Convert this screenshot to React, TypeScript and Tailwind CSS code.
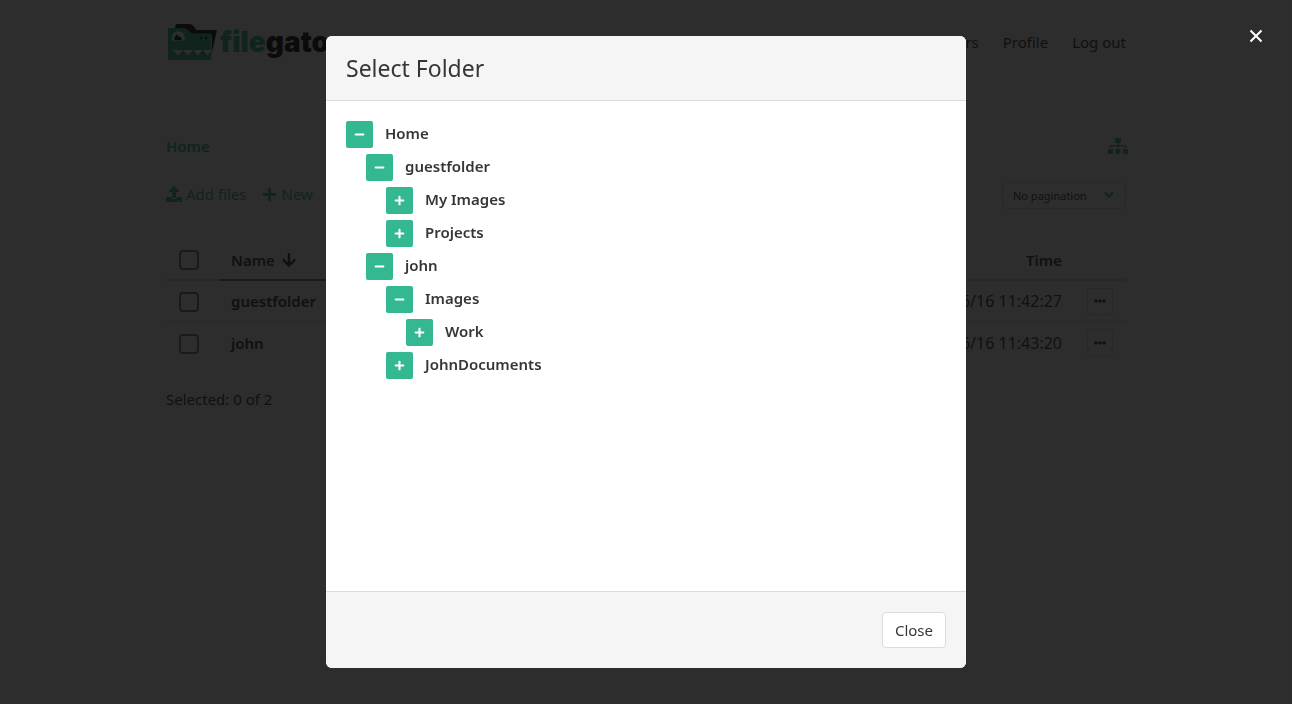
import { useState } from "react";
import {
  FaArrowDown,
  FaChevronDown,
  FaEllipsisH,
  FaMinus,
  FaPlus,
  FaSitemap,
  FaUpload,
} from "react-icons/fa";

type Folder = {
  name: string;
  open?: boolean;
  children?: Folder[];
};

const tree: Folder = {
  name: "Home",
  open: true,
  children: [
    {
      name: "guestfolder",
      open: true,
      children: [{ name: "My Images" }, { name: "Projects" }],
    },
    {
      name: "john",
      open: true,
      children: [
        { name: "Images", open: true, children: [{ name: "Work" }] },
        { name: "JohnDocuments" },
      ],
    },
  ],
};

const files = [
  { name: "guestfolder", size: "Folder", time: "19/06/16 11:42:27" },
  { name: "john", size: "Folder", time: "19/06/16 11:43:20" },
];

const checkboxClass =
  "block h-5 w-5 appearance-none rounded border-2 border-[#7a7a7a] bg-white checked:bg-[#34b891]";

function Logo() {
  return (
    <a href="#" aria-label="filegator" className="flex items-center gap-[2px] pl-[2px]">
      <svg width="50" height="36" viewBox="0 0 50 36">
        <path d="M7 4 8 0h13q3 0 4.500 2l3 4H49l-5 22V12H7Z" fill="#111" />
        <path
          d="M0 5q0-1 1-1h15c4 0 5 5.500 10 5.500h17.500V34q0 2-2 2H2q-2 0-2-2Z"
          fill="#34b891"
        />
        <path d="M4 16.500v-3a6.300 6.300 0 0 1 12.600 0v3Z" fill="#fff" />
        <path d="M6.500 16v-2.500q.5-2 3-3.500l.5 2.500 3 .5.800 3Z" fill="#111" />
        <circle cx="33" cy="14" r="1.200" fill="#111" />
        <circle cx="38" cy="14" r="1.200" fill="#111" />
        <path
          d="M5 26h10l-5 5.500ZM15.500 26h9.500l-5 5.500ZM25.500 26h9l-4.500 5.500ZM35 26h8.500l-4 5.500Z"
          fill="#fff"
        />
      </svg>
      <span className="font-['Inter',sans-serif] text-[28px] leading-9 font-black text-[#111]">
        <span className="text-[#34b891]">file</span>gator
      </span>
    </a>
  );
}

function TreeNode({ folder }: { folder: Folder }) {
  const [open, setOpen] = useState(Boolean(folder.open));

  return (
    <li>
      <div className="mb-[6px] flex items-start gap-3">
        <button
          type="button"
          aria-label={`${open ? "Collapse" : "Expand"} ${folder.name}`}
          onClick={() => setOpen(!open)}
          className="flex h-[27px] w-[27px] items-center justify-center rounded-xs bg-[#34b891] text-white"
        >
          {open ? <FaMinus size={11} /> : <FaPlus size={11} />}
        </button>
        <a href="#" className="font-semibold">
          {folder.name}
        </a>
      </div>
      {open && folder.children && (
        <ul className="pl-5">
          {folder.children.map((child) => (
            <TreeNode key={child.name} folder={child} />
          ))}
        </ul>
      )}
    </li>
  );
}

function Browser() {
  return (
    <div className="mx-auto max-w-[960px]">
      <nav className="flex items-center justify-between pt-6">
        <Logo />
        <div className="flex gap-6">
          <a href="#">Files</a>
          <a href="#">Users</a>
          <a href="#">Profile</a>
          <a href="#">Log out</a>
        </div>
      </nav>

      <div className="mt-[74px] flex h-6 items-center justify-between text-[#34b891]">
        <a href="#" className="font-semibold">
          Home
        </a>
        <button
          type="button"
          aria-label="Select folder"
          className="flex w-4 justify-center"
        >
          <FaSitemap className="h-4 w-5 shrink-0" />
        </button>
      </div>

      <div className="mt-6 flex items-start justify-between">
        <div className="flex gap-4 text-[#34b891]">
          <button type="button" className="flex items-center gap-1">
            <FaUpload size={16} /> Add files
          </button>
          <button type="button" className="flex items-center gap-1">
            <FaPlus size={15} /> New
          </button>
        </div>
        <div className="relative">
          <select
            aria-label="Items per page"
            className="block h-[27px] w-[124px] appearance-none rounded-sm border border-[#dbdbdb] bg-white px-[10px] text-[11px]"
          >
            <option>No pagination</option>
            <option>5 per page</option>
            <option>10 per page</option>
          </select>
          <FaChevronDown
            size={10}
            stroke="currentColor"
            strokeWidth={50}
            className="pointer-events-none absolute top-2 right-3 text-[#34b891]"
          />
        </div>
      </div>

      <table className="mt-[30px] w-full table-fixed border-separate border-spacing-0">
        <thead>
          <tr className="h-[42px] text-left [&>th]:pt-[2px]">
            <th className="w-[53px] border-b-2 border-[#dbdbdb] px-[13px]">
              <input type="checkbox" aria-label="Select all" className={checkboxClass} />
            </th>
            <th className="border-b-2 border-[#7a7a7a] px-3 font-semibold">
              <span className="flex items-center gap-[6px]">
                Name <FaArrowDown size={16} />
              </span>
            </th>
            <th className="w-[120px] border-b-2 border-[#dbdbdb] px-3 text-right font-semibold">
              Size
            </th>
            <th className="w-[190px] border-b-2 border-[#dbdbdb] px-3 text-right font-semibold">
              Time
            </th>
            <th className="w-[52px] border-b-2 border-[#dbdbdb]" />
          </tr>
        </thead>
        <tbody className="[&>tr:not(:last-child)>td]:border-b [&>tr>td]:border-[#dbdbdb]">
          {files.map((file) => (
            <tr key={file.name} className="h-[41px]">
              <td className="px-[13px] pt-[2px]">
                <input
                  type="checkbox"
                  aria-label={`Select ${file.name}`}
                  className={checkboxClass}
                />
              </td>
              <td className="px-3 font-semibold">
                <a href="#">{file.name}</a>
              </td>
              <td className="px-3 text-right">{file.size}</td>
              <td className="px-3 text-right text-base">{file.time}</td>
              <td className="px-[13px]">
                <button
                  type="button"
                  aria-label={`Actions for ${file.name}`}
                  className="flex h-[27px] w-[26px] items-center justify-center rounded-xs border border-[#dbdbdb]"
                >
                  <FaEllipsisH size={12} />
                </button>
              </td>
            </tr>
          ))}
        </tbody>
      </table>

      <p className="mt-6">Selected: 0 of 2</p>
    </div>
  );
}

function FolderModal() {
  return (
    <div className="fixed inset-0 flex items-center justify-center bg-[#0a0a0a]/86">
      <div
        role="dialog"
        aria-labelledby="modal-title"
        className="w-full max-w-[640px] overflow-hidden rounded-md bg-white"
      >
        <header className="border-b border-[#dbdbdb] bg-[#f5f5f5] p-5">
          <h1 id="modal-title" className="text-[23px] leading-6">
            Select Folder
          </h1>
        </header>
        <section className="min-h-[490px] p-5">
          <ul>
            <TreeNode folder={tree} />
          </ul>
        </section>
        <footer className="flex justify-end border-t border-[#dbdbdb] bg-[#f5f5f5] p-5">
          <button
            type="button"
            className="h-9 rounded border border-[#dbdbdb] bg-white px-3"
          >
            Close
          </button>
        </footer>
      </div>
      <button
        type="button"
        aria-label="Close dialog"
        className="absolute top-5 right-5 flex h-8 w-8 items-center justify-center text-white"
      >
        <svg width="14" height="14" viewBox="0 0 14 14" stroke="currentColor" strokeWidth="2">
          <path d="M1.500 1.500l11 11M12.500 1.500l-11 11" />
        </svg>
      </button>
    </div>
  );
}

export default function App() {
  return (
    <div className="min-h-screen bg-white font-['Noto_Sans',sans-serif] text-[15px] leading-6 text-[#363636]">
      <Browser />
      <FolderModal />
    </div>
  );
}
